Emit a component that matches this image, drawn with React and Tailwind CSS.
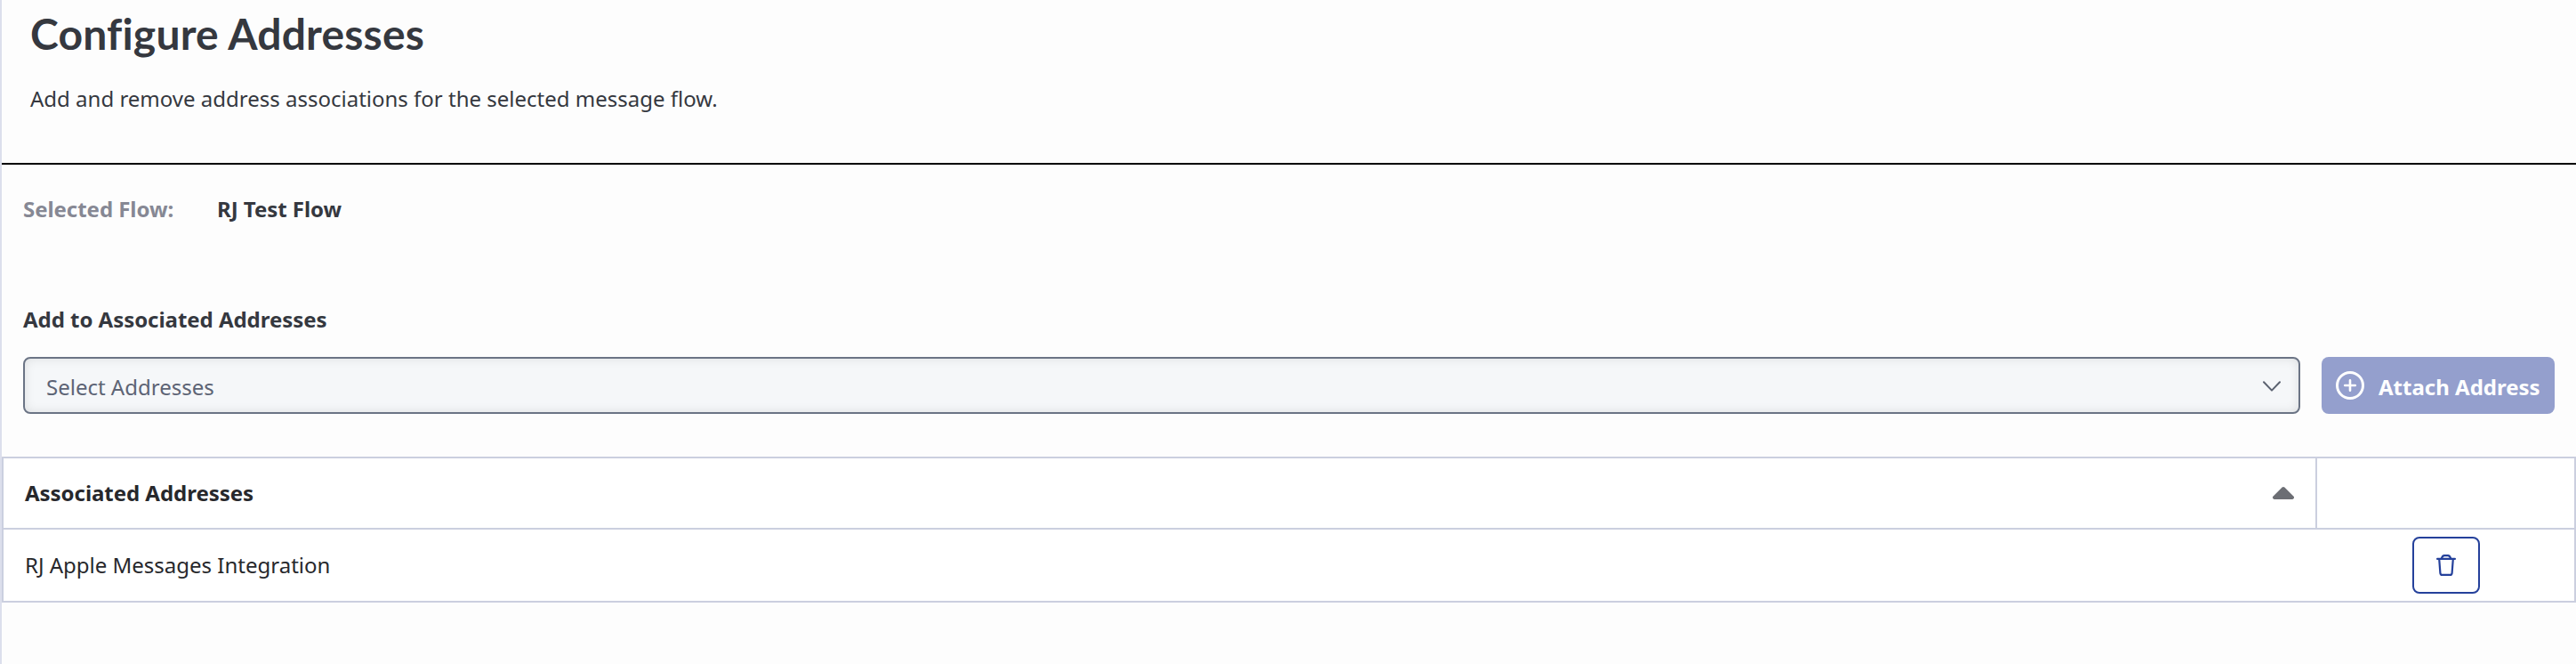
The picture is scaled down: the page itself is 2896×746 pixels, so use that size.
function ChevronDown() {
  return (
    <svg className="mt-0.5 h-3 w-5" viewBox="0 0 20 12" fill="none" stroke="#5b6270" strokeWidth="2" strokeLinecap="round" strokeLinejoin="round">
      <path d="M1 1.2 L10 10.6 L19 1.2" />
    </svg>
  );
}

function PlusCircle() {
  return (
    <svg className="size-8 shrink-0" viewBox="0 0 32 32" fill="none" stroke="#ffffff" strokeLinecap="round">
      <circle cx="16" cy="16" r="14.5" strokeWidth="3" />
      <path d="M16 10.2 V21.8 M10.2 16 H21.8" strokeWidth="2.6" />
    </svg>
  );
}

function SortUp() {
  return (
    <svg className="h-3.5 w-6" viewBox="0 0 24 14" fill="#6c6e74">
      <path d="M10.6 .6 Q12 -.6 13.4 .6 L23.4 10.4 Q24.4 11.6 23.8 12.8 Q23.2 14 21.8 14 H2.2 Q.8 14 .2 12.8 Q-.4 11.6 .6 10.4 Z" />
    </svg>
  );
}

function Trash() {
  return (
    <svg className="h-6 w-[22px]" viewBox="0 0 22 24" fill="none" stroke="#25419b" strokeWidth="2.2" strokeLinecap="round" strokeLinejoin="round">
      <path d="M1.1 4.9 H20.9" />
      <path d="M5.8 4.6 Q6.8 1.1 9 1.1 H13 Q15.2 1.1 16.2 4.6" />
      <path d="M3.2 5 L4.4 20.8 Q4.6 22.9 6.4 22.9 H15.6 Q17.4 22.9 17.6 20.8 L18.8 5" />
    </svg>
  );
}

export default function App() {
  return (
    <main className="flex h-[746px] w-full flex-col border-l-2 border-[#dcdfec] bg-[#fdfdfd] font-['Noto_Sans',sans-serif] text-2xl leading-8 text-[#35383f]">
      <header className="flex h-[185px] flex-col border-b-2 border-black pl-8">
        <h1 className="mt-2 h-[62px] font-[Lato,sans-serif] text-[48px] leading-[60px] font-bold tracking-[0.2px] whitespace-nowrap">
          Configure Addresses
        </h1>
        <p className="mt-[25px]">Add and remove address associations for the selected message flow.</p>
      </header>

      <section className="flex h-[328px] flex-col pr-6 pl-6">
        <div className="mt-[34px] flex font-bold tracking-[-0.04px]">
          <span className="w-[218px] text-[#868894]">Selected Flow:</span>
          <span>RJ Test Flow</span>
        </div>
        <label className="mt-[92px] font-bold tracking-[-0.04px]">Add to Associated Addresses</label>
        <div className="mt-[26px] flex gap-6">
          <div className="flex h-16 flex-1 items-center justify-between rounded-lg border-2 border-[#6b7485] bg-[#f5f7f9] pr-5 pl-6 text-[#5d6475] shadow-[inset_0_0_12px_rgba(0,0,0,0.1)]">
            <span className="pt-1">Select Addresses</span>
            <ChevronDown />
          </div>
          <button className="flex h-16 w-[262px] items-center gap-4 rounded-lg bg-[#949fcd] pl-4 font-bold whitespace-nowrap text-white">
            <PlusCircle />
            <span className="pt-1">Attach Address</span>
          </button>
        </div>
      </section>

      <section className="flex h-[164px] flex-col border-2 border-[#cbcfdf] bg-white text-[#27282c]">
        <div className="flex h-20 border-b-2 border-[#cbcfdf] font-bold tracking-[-0.04px]">
          <div className="flex flex-1 items-center justify-between border-r-2 border-[#cbcfdf] pr-6 pl-6">
            <span>Associated Addresses</span>
            <SortUp />
          </div>
          <div className="w-[289px]" />
        </div>
        <div className="flex h-20 items-center">
          <div className="flex-1 pl-6">RJ Apple Messages Integration</div>
          <div className="flex w-[289px] justify-center">
            <button className="flex h-16 w-[76px] items-center justify-center rounded-lg border-2 border-[#25419b]" aria-label="Remove address">
              <Trash />
            </button>
          </div>
        </div>
      </section>
    </main>
  );
}
